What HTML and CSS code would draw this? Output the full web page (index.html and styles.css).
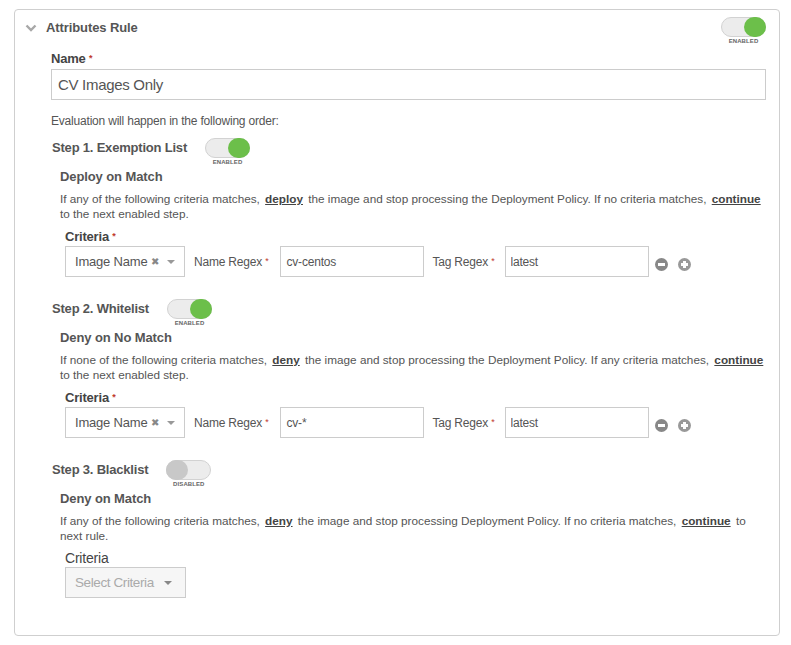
FILE: index.html
```html
<!DOCTYPE html>
<html lang="en">
<head>
  <meta charset="UTF-8" />
  <title>Attributes Rule</title>
  <link rel="stylesheet" href="styles.css">
</head>
<body>
  <div class="rule-card">
    <div class="rule-header">
      <div class="rule-title-wrap">
        <svg class="chevron" width="12" height="8" viewBox="0 0 12 8">
          <polyline points="1.5,1.5 6,6 10.5,1.5" fill="none" stroke="#a8a8a8" stroke-width="2.4" />
        </svg>
        <span class="rule-title">Attributes Rule</span>
      </div>
      <div class="toggle on">
        <div class="toggle-track"><div class="toggle-knob"></div></div>
        <div class="toggle-label">Enabled</div>
      </div>
    </div>

    <div class="rule-body">
      <div class="field-label name-label">Name <span class="req">*</span></div>
      <input class="text-input name-input" type="text" value="CV Images Only">

      <div class="eval-note">Evaluation will happen in the following order:</div>

      <!-- Step 1 -->
      <div class="step">
        <div class="step-head">
          <span class="step-title">Step 1. Exemption List</span>
          <div class="toggle on">
            <div class="toggle-track"><div class="toggle-knob"></div></div>
            <div class="toggle-label">Enabled</div>
          </div>
        </div>
        <div class="step-body">
          <div class="step-subtitle">Deploy on Match</div>
          <p class="step-desc">If any of the following criteria matches, <a class="kw">deploy</a> the image and stop processing the Deployment Policy. If no criteria matches, <a class="kw">continue</a> <span>to the next enabled step.</span></p>
          <div class="criteria">
            <div class="field-label">Criteria <span class="req">*</span></div>
            <div class="criteria-row">
              <div class="select">
                <span class="select-value">Image Name</span>
                <span class="select-clear">✖</span>
                <span class="caret"></span>
              </div>
              <label class="row-label">Name Regex <span class="req">*</span></label>
              <input class="text-input regex-input" type="text" value="cv-centos">
              <label class="row-label tag-label">Tag Regex <span class="req">*</span></label>
              <input class="text-input regex-input" type="text" value="latest">
              <div class="row-actions">
                <span class="round-btn minus"></span>
                <span class="round-btn plus"></span>
              </div>
            </div>
          </div>
        </div>
      </div>

      <!-- Step 2 -->
      <div class="step">
        <div class="step-head">
          <span class="step-title">Step 2. Whitelist</span>
          <div class="toggle on">
            <div class="toggle-track"><div class="toggle-knob"></div></div>
            <div class="toggle-label">Enabled</div>
          </div>
        </div>
        <div class="step-body">
          <div class="step-subtitle">Deny on No Match</div>
          <p class="step-desc">If none of the following criteria matches, <a class="kw">deny</a> the image and stop processing the Deployment Policy. If any criteria matches, <a class="kw">continue</a> <span>to the next enabled step.</span></p>
          <div class="criteria">
            <div class="field-label">Criteria <span class="req">*</span></div>
            <div class="criteria-row">
              <div class="select">
                <span class="select-value">Image Name</span>
                <span class="select-clear">✖</span>
                <span class="caret"></span>
              </div>
              <label class="row-label">Name Regex <span class="req">*</span></label>
              <input class="text-input regex-input" type="text" value="cv-*">
              <label class="row-label tag-label">Tag Regex <span class="req">*</span></label>
              <input class="text-input regex-input" type="text" value="latest">
              <div class="row-actions">
                <span class="round-btn minus"></span>
                <span class="round-btn plus"></span>
              </div>
            </div>
          </div>
        </div>
      </div>

      <!-- Step 3 -->
      <div class="step">
        <div class="step-head">
          <span class="step-title">Step 3. Blacklist</span>
          <div class="toggle off">
            <div class="toggle-track"><div class="toggle-knob"></div></div>
            <div class="toggle-label">Disabled</div>
          </div>
        </div>
        <div class="step-body">
          <div class="step-subtitle">Deny on Match</div>
          <p class="step-desc">If any of the following criteria matches, <a class="kw">deny</a> the image and stop processing Deployment Policy. If no criteria matches, <a class="kw">continue</a> to <span>next rule.</span></p>
          <div class="criteria">
            <div class="field-label disabled-label">Criteria</div>
            <div class="criteria-row">
              <div class="select select-disabled">
                <span class="select-value">Select Criteria</span>
                <span class="caret"></span>
              </div>
            </div>
          </div>
        </div>
      </div>
    </div>
  </div>
</body>
</html>
```

FILE: styles.css
```css
* {
  margin: 0;
  padding: 0;
  box-sizing: border-box;
}

:root {
  --text: #555;
  --text-dark: #444;
  --border: #cfcfcf;
  --green: #6cbf4a;
  --req: #c0392b;
}

body {
  font-family: "Liberation Sans", Arial, sans-serif;
  color: var(--text);
  background: #fff;
  padding: 9px 11px 9px 14px;
  letter-spacing: -0.2px;
}

.rule-card {
  border: 1px solid var(--border);
  border-radius: 4px;
  padding: 7px 13px 37px 10px;
}

.rule-header {
  display: flex;
  justify-content: space-between;
  align-items: flex-start;
}

.rule-title-wrap {
  display: flex;
  align-items: center;
  gap: 9px;
  height: 20px;
}

.chevron {
  display: block;
  margin-top: 2px;
}

.rule-title {
  font-size: 13px;
  font-weight: bold;
  color: var(--text);
  letter-spacing: -0.1px;
}

/* Toggle */
.toggle {
  display: flex;
  flex-direction: column;
  align-items: center;
  width: 45px;
}

.toggle-track {
  position: relative;
  width: 45px;
  height: 20px;
  border-radius: 10px;
  background: #ececec;
  border: 1px solid #d2d2d2;
}

.toggle-knob {
  position: absolute;
  top: -1px;
  width: 22px;
  height: 20px;
  border-radius: 11px;
}

.toggle.on .toggle-knob {
  right: -1px;
  background: var(--green);
}

.toggle.off .toggle-knob {
  left: -1px;
  background: #c8c8c8;
}

.toggle-label {
  font-size: 6px;
  line-height: 8px;
  font-weight: bold;
  text-transform: uppercase;
  color: #666;
  letter-spacing: 0.1px;
}

/* Body */
.rule-body {
  margin-left: 26px;
}

.field-label {
  font-size: 13px;
  line-height: 16px;
  font-weight: bold;
  color: var(--text-dark);
}

.req {
  color: var(--req);
  font-size: 9px;
  vertical-align: 2px;
}

.name-label {
  margin-top: 5px;
}

.text-input {
  display: block;
  border: 1px solid #ccc;
  font-family: inherit;
  color: var(--text);
  background: #fff;
  outline: none;
  letter-spacing: -0.2px;
}

.name-input {
  width: 100%;
  height: 31px;
  margin-top: 2px;
  padding: 0 6px;
  font-size: 15px;
  letter-spacing: -0.3px;
}

.eval-note {
  margin-top: 14px;
  font-size: 12px;
  line-height: 15px;
  color: var(--text);
}

.step {
  margin-top: 9px;
}

.step + .step {
  margin-top: 22px;
}

.step-head {
  display: flex;
  align-items: flex-start;
  gap: 18px;
  margin-left: 1px;
}

.step-title {
  font-size: 13px;
  line-height: 20px;
  font-weight: bold;
  color: var(--text);
}

.step-body {
  margin-left: 9px;
}

.step-subtitle {
  margin-top: 3px;
  font-size: 13px;
  line-height: 16px;
  font-weight: bold;
  color: var(--text);
  letter-spacing: -0.1px;
}

.step-desc {
  margin-top: 6px;
  font-size: 11.75px;
  line-height: 15px;
  letter-spacing: 0;
  color: var(--text);
}

.kw {
  font-weight: bold;
  color: var(--text-dark);
  text-decoration: underline;
  margin: 0 2px;
}

.criteria {
  margin-top: 7px;
  margin-left: 5px;
}

.disabled-label {
  font-weight: normal;
  font-size: 14px;
}

.criteria-row {
  display: flex;
  align-items: center;
  margin-top: 1px;
}

.select {
  display: flex;
  align-items: center;
  width: 120px;
  height: 31px;
  padding: 0 9px;
  border: 1px solid #ccc;
  background: #fff;
}

.select-value {
  font-size: 13px;
  color: var(--text);
  flex: 1;
  white-space: nowrap;
  letter-spacing: -0.2px;
}

.select-clear {
  font-size: 10px;
  color: #888;
  margin-right: 8px;
}

.caret {
  width: 0;
  height: 0;
  border-left: 4px solid transparent;
  border-right: 4px solid transparent;
  border-top: 4px solid #999;
}

.select-disabled {
  width: 121px;
  height: 31px;
  padding: 0 13px 0 9px;
  background: #f6f6f6;
}

.select-disabled .select-value {
  color: #aaa;
  font-size: 13.5px;
  letter-spacing: -0.4px;
}

.select-disabled .caret {
  border-top-color: #888;
}

.row-label {
  font-size: 12px;
  color: var(--text);
  margin: 0 12px 0 9px;
  white-space: nowrap;
}

.tag-label {
  margin: 0 10px 0 8px;
}

.regex-input {
  width: 144px;
  height: 31px;
  padding: 0 5px;
  font-size: 12px;
}

.row-actions {
  display: flex;
  gap: 10px;
  margin-left: 6px;
  margin-top: 6px;
}

.round-btn {
  position: relative;
  width: 13px;
  height: 13px;
  border-radius: 50%;
  background: #888;
}

.round-btn.plus {
  background: #999;
}

.round-btn::before,
.round-btn.plus::after {
  content: "";
  position: absolute;
  left: 3px;
  top: 5px;
  width: 7px;
  height: 3px;
  background: #fff;
}

.round-btn.plus::after {
  left: 5px;
  top: 3px;
  width: 3px;
  height: 7px;
}
```
